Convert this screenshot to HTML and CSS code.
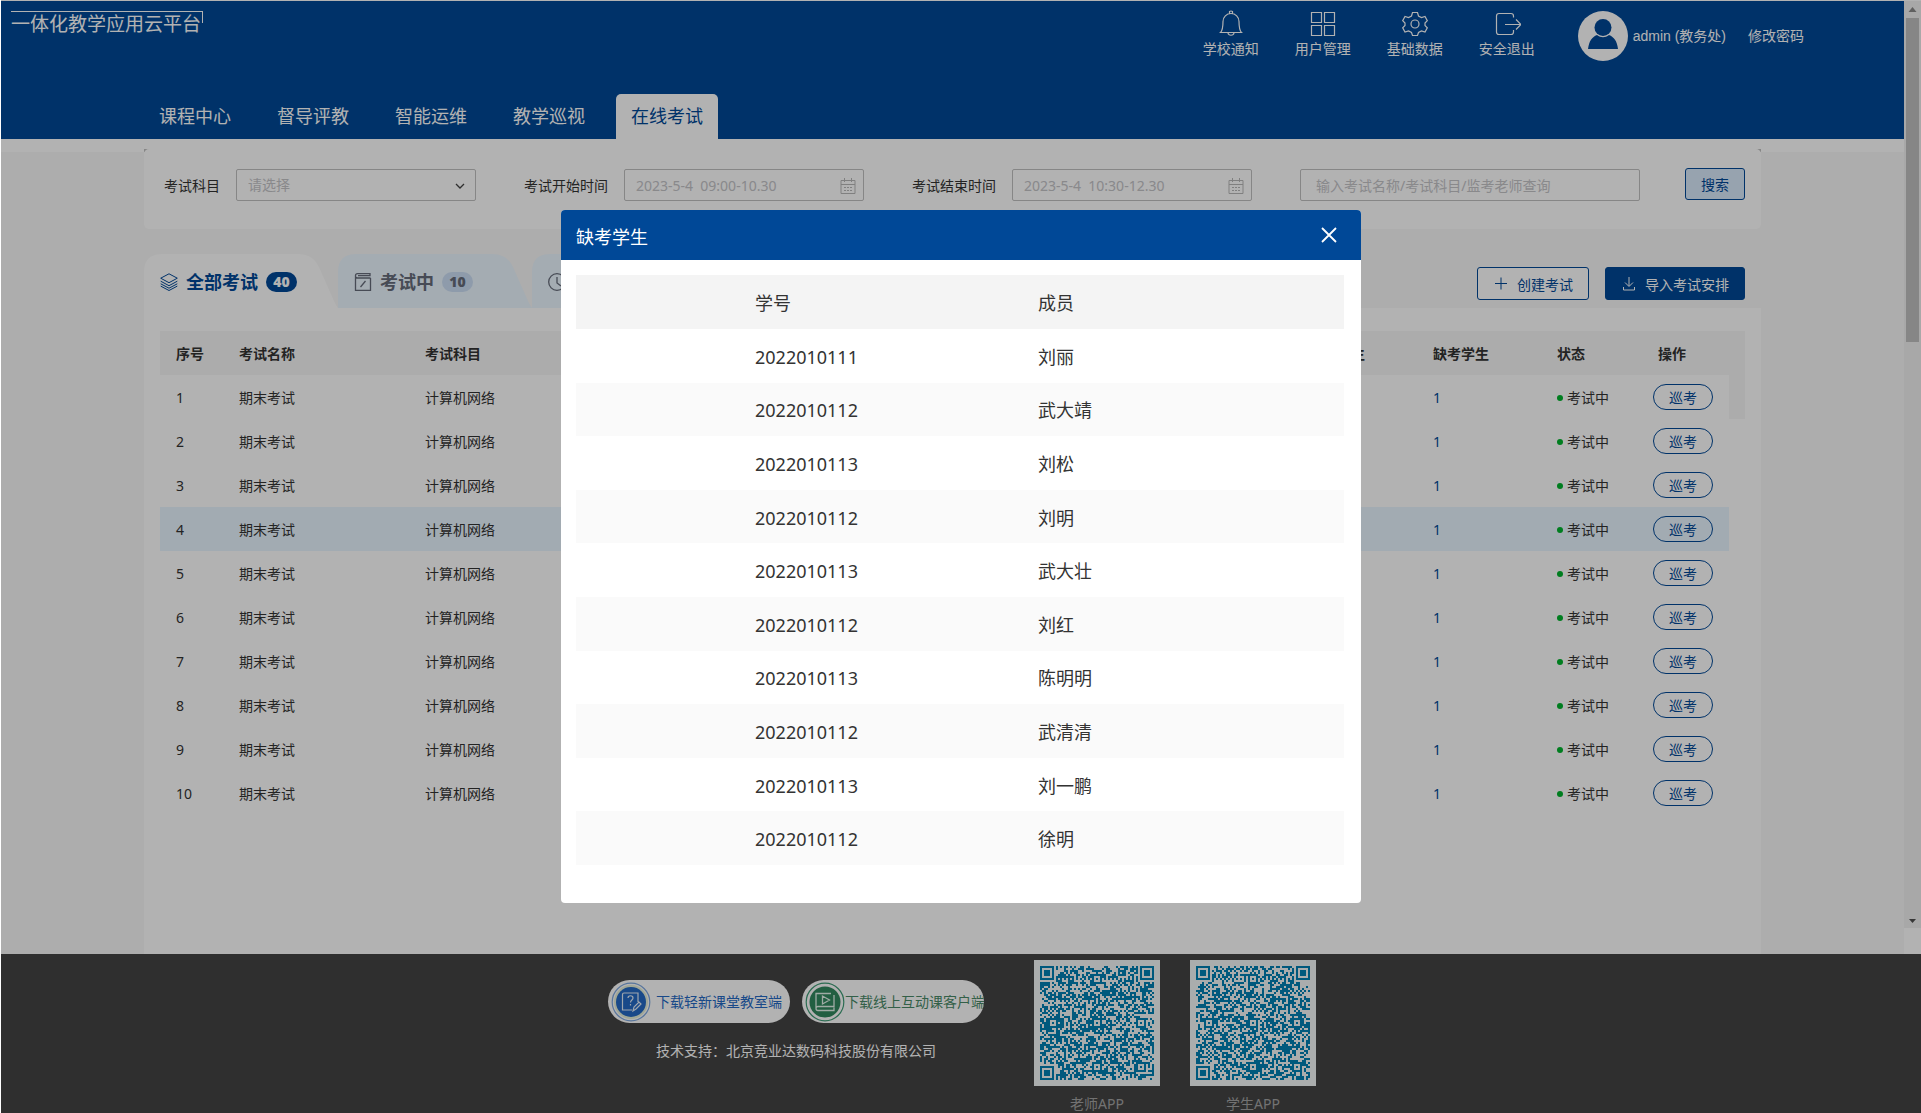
FILE: index.html
```html
<!DOCTYPE html>
<html lang="zh-CN">
<head>
<meta charset="utf-8">
<title>一体化教学应用云平台</title>
<link rel="stylesheet" href="styles.css">
</head>
<body>
<div class="viewport">
  <div class="page">
    <header class="header">
      <div class="header-top">
        <div class="logo">一体化教学应用云平台</div>
        <div class="tools">
          <a class="tool" href="#">
            <svg width="28" height="28" viewBox="0 0 28 28"><path d="M3.500 23.500h21c-2-2-2.500-4-2.500-11 0-4.500-3.500-8-8-8s-8 3.500-8 8c0 7-.5 9-2.500 11zM12.500 4.500V2.500q1.500-1 3 0v2M11 24c.5 3 5.500 3 6 0"/></svg>
            学校通知</a>
          <a class="tool" href="#">
            <svg width="28" height="28" viewBox="0 0 28 28"><path d="M2.500 3.500h10v10h-10zM15.500 3.500h10v10h-10zM2.500 16.500h10v10h-10zM15.500 16.500h10v10h-10z"/></svg>
            用户管理</a>
          <a class="tool" href="#">
            <svg width="28" height="28" viewBox="0 0 28 28"><circle cx="14" cy="15" r="4"/><path d="M11.500 3.500h5l1 3.500 3 1.500 3.500-1 2.300 4.200-2.300 2.300v2.500l2.300 2.300-2.300 4.200-3.500-1-3 1.500-1 3h-5l-1-3-3-1.500-3.500 1-2.300-4.200 2.300-2.300v-2.500l-2.300-2.300 2.300-4.200 3.500 1 3-1.500z"/></svg>
            基础数据</a>
          <a class="tool" href="#">
            <svg width="28" height="28" viewBox="0 0 28 28"><path d="M20.500 8.500V7q0-2.500-2.500-2.500H6Q3.500 4.500 3.500 7v16q0 2.500 2.500 2.500h12q2.500 0 2.500-2.500v-2M12 15.500h16M23 10.500l5 5-5 5"/></svg>
            安全退出</a>
        </div>
        <div class="user">
          <svg class="avatar" width="50" height="50" viewBox="0 0 50 50"><circle cx="25" cy="25" r="25" fill="#fff"/><circle cx="25" cy="16.500" r="8.500" fill="#004897"/><path d="M10 38c1-8 4-12 9-14 4 3 8 3 12 0 5 2 8 6 9 14z" fill="#004897"/></svg>
          <span class="user-name">admin (教务处)</span>
          <a class="password" href="#">修改密码</a>
        </div>
      </div>
      <nav class="nav">
        <a href="#">课程中心</a>
        <a href="#">督导评教</a>
        <a href="#">智能运维</a>
        <a href="#">教学巡视</a>
        <a class="active" href="#">在线考试</a>
      </nav>
    </header>
    <main class="main">
      <div class="filter-wrap">
        <form class="filters">
          <label for="subject">考试科目</label>
          <div class="control">
            <select id="subject"><option>请选择</option></select>
            <svg class="chevron" width="12" height="12" viewBox="0 0 12 12"><path d="M2 4l4 4 4-4"/></svg>
          </div>
          <label for="start">考试开始时间</label>
          <div class="control">
            <input id="start" type="text" placeholder="2023-5-4&nbsp; 09:00-10.30">
            <svg class="calendar" width="16" height="16" viewBox="0 0 16 16"><path d="M1 2.500h14v13H1zM1 6.500h14M4.500 0v4M11.500 0v4M4 9.500h2M7 9.500h2M10 9.500h2M4 12.500h2M7 12.500h2M10 12.500h2"/></svg>
          </div>
          <label for="end">考试结束时间</label>
          <div class="control">
            <input id="end" type="text" placeholder="2023-5-4&nbsp; 10:30-12.30">
            <svg class="calendar" width="16" height="16" viewBox="0 0 16 16"><path d="M1 2.500h14v13H1zM1 6.500h14M4.500 0v4M11.500 0v4M4 9.500h2M7 9.500h2M10 9.500h2M4 12.500h2M7 12.500h2M10 12.500h2"/></svg>
          </div>
          <input class="search" type="text" aria-label="查询" placeholder="输入考试名称/考试科目/监考老师查询">
          <button class="search-btn" type="button">搜索</button>
        </form>
      </div>
      <section class="exams">
        <div class="tab-bar">
          <div class="tabs">
            <button class="tab current" type="button">
              <svg class="tab-shape" viewBox="0 0 194 54"><path d="M0 54V18Q0 0 18 0H154C165 0 171 5 175 13L190 47Q193 53 194 54z"/></svg>
              <svg class="tab-icon" width="18" height="18" viewBox="0 0 18 18"><path d="M9 .8L17.300 5.200 9 9.700.7 5.200zM.7 8.200L9 12.700l8.300-4.500M.7 10.800L9 15.200l8.300-4.400M.7 13.100L9 17.500l8.300-4.400"/></svg>
              <span>全部考试</span><b class="badge">40</b>
            </button>
            <button class="tab" type="button">
              <svg class="tab-shape" viewBox="0 0 194 54"><path d="M0 54V18Q0 0 18 0H154C165 0 171 5 175 13L190 47Q193 53 194 54z"/></svg>
              <svg class="tab-icon" width="18" height="18" viewBox="0 0 18 18"><path d="M16.500 5v12.300h-15V2.500Q1.500.7 3.500.7h12.500v2H4M1.500 3.500Q2 5 3.500 5h13M6.500 14l5-6"/></svg>
              <span>考试中</span><b class="badge">10</b>
            </button>
            <button class="tab" type="button" aria-label="时间">
              <svg class="tab-shape" viewBox="0 0 194 54"><path d="M0 54V18Q0 0 18 0H154C165 0 171 5 175 13L190 47Q193 53 194 54z"/></svg>
              <svg class="tab-icon" width="18" height="18" viewBox="0 0 18 18"><circle cx="9" cy="9" r="8.300"/><path d="M9 4v6l4 3"/></svg>
            </button>
          </div>
          <div class="actions">
            <button class="btn" type="button"><svg width="12" height="14" viewBox="0 0 12 14"><path d="M0 6.500h12M6 .5v12"/></svg><span>创建考试</span></button>
            <button class="btn primary" type="button"><svg width="12" height="14" viewBox="0 0 12 14"><path d="M6 0v9M2 5.500l4 4 4-4M.5 10v3h11v-3"/></svg><span>导入考试安排</span></button>
          </div>
        </div>
        <div class="exam-body">
          <table class="exam-table">
            <colgroup><col class="c-no"><col class="c-name"><col class="c-name"><col><col class="c-num"><col class="c-num"><col class="c-state"><col class="c-op"><col class="c-gutter"></colgroup>
            <thead>
              <tr><th>序号</th><th>考试名称</th><th>考试科目</th><th></th><th>实考学生</th><th>缺考学生</th><th>状态</th><th>操作</th><th></th></tr>
            </thead>
            <tbody id="exam-rows"></tbody>
          </table>
        </div>
      </section>
    </main>
  </div>
  <div class="scrollbar">
    <svg width="17" height="17" viewBox="0 0 17 17"><path d="M4.500 11h8l-4-5z" fill="#8a8a8a"/></svg>
    <div class="thumb"></div>
    <svg class="down" width="17" height="17" viewBox="0 0 17 17"><path d="M5 8h7l-3.500 4z" fill="#505050"/></svg>
  </div>
</div>
<footer class="footer">
  <div class="downloads">
    <div class="pills">
      <a class="pill blue" href="#"><svg width="40" height="40" viewBox="0 0 40 40"><circle cx="20" cy="20" r="18.800" fill="#fff" stroke="#7fa9e0" stroke-width="1.200"/><circle cx="20" cy="20" r="17" fill="#e6f0d8"/><circle cx="20" cy="20" r="15" fill="#2569c4"/><path d="M21 28H11.500V12.500Q11.500 11 13 11h14v9M17 16c0-3 5-3 5 0 0 2-2.500 2-2.500 4.500M19.500 22v1.500M22 29l1-4 5-5 2 2-5 5z" fill="none" stroke="#e4eefa" stroke-width="1.200"/></svg>下载轻新课堂教室端</a>
      <a class="pill green" href="#"><svg width="40" height="40" viewBox="0 0 40 40"><circle cx="20" cy="20" r="18.800" fill="#fff" stroke="#3f9c76" stroke-width="1.200"/><circle cx="20" cy="20" r="15.500" fill="#32895f"/><path d="M29 13v11.500H13q-2 0-2 2t2 2h16v-3M11 26V11.500h15M17.500 14v8l7-4z" fill="none" stroke="#e4f5ec" stroke-width="1.300"/></svg>下载线上互动课客户端</a>
    </div>
    <p>技术支持：北京竞业达数码科技股份有限公司</p>
  </div>
  <figure class="qr"><svg viewBox="0 0 63 63" data-seed="17"><path/></svg><figcaption>老师APP</figcaption></figure>
  <figure class="qr"><svg viewBox="0 0 63 63" data-seed="91"><path/></svg><figcaption>学生APP</figcaption></figure>
</footer>

<div class="overlay">
  <section class="modal" role="dialog" aria-labelledby="modal-title">
    <div class="modal-head">
      <h2 id="modal-title">缺考学生</h2>
      <button type="button" aria-label="关闭"><svg width="16" height="16" viewBox="0 0 16 16"><path d="M1 1l14 14M15 1L1 15"/></svg></button>
    </div>
    <table class="student-table">
      <thead><tr><th>学号</th><th>成员</th></tr></thead>
      <tbody>
        <tr><td>2022010111</td><td>刘丽</td></tr>
        <tr><td>2022010112</td><td>武大靖</td></tr>
        <tr><td>2022010113</td><td>刘松</td></tr>
        <tr><td>2022010112</td><td>刘明</td></tr>
        <tr><td>2022010113</td><td>武大壮</td></tr>
        <tr><td>2022010112</td><td>刘红</td></tr>
        <tr><td>2022010113</td><td>陈明明</td></tr>
        <tr><td>2022010112</td><td>武清清</td></tr>
        <tr><td>2022010113</td><td>刘一鹏</td></tr>
        <tr><td>2022010112</td><td>徐明</td></tr>
      </tbody>
    </table>
  </section>
</div>
<script src="app.js"></script>
</body>
</html>
```
FILE: styles.css
```css
* { box-sizing: border-box; }

body {
  margin: 0;
  padding: 1px 0 0 1px;
  min-height: 100vh;
  display: flex;
  flex-direction: column;
  position: relative;
  background: #fff;
  color: #333;
  font: 14px/20px "Noto Sans", "Noto Sans CJK SC", sans-serif;
}

a { color: inherit; text-decoration: none; }
button, input, select { font: inherit; }

.viewport { flex: 1; display: flex; }
.page { flex: 1; display: flex; flex-direction: column; }

/* header */
.header {
  height: 138px;
  display: flex;
  flex-direction: column;
  justify-content: space-between;
  background: #004897;
  color: #fff;
  font-family: "Liberation Sans", "Noto Sans CJK SC", sans-serif;
}
.header-top {
  display: flex;
  align-items: flex-start;
  padding: 10px 100px 0 10px;
}
.logo {
  width: 192px;
  height: 24px;
  font-size: 19px;
  line-height: 27px;
  white-space: nowrap;
  background:
    linear-gradient(#fff, #fff) 0 0 / 100% 1px no-repeat,
    linear-gradient(#fff, #fff) 100% 0 / 1px 12px no-repeat;
}
.tools { display: flex; gap: 36px; margin-left: auto; margin-right: 43px; }
.tool {
  width: 56px;
  display: flex;
  flex-direction: column;
  align-items: center;
  white-space: nowrap;
}
.tool svg { fill: none; stroke: #fff; stroke-width: 1.2; margin-top: -2px; margin-bottom: 2px; }
.user { display: flex; align-items: center; white-space: nowrap; }
.user-name { margin-left: 5px; }
.password { margin-left: 22px; }

.nav { display: flex; gap: 16px; padding: 0 143px; font-size: 18px; line-height: 43px; }
.nav a { width: 102px; padding-top: 2px; text-align: center; border-radius: 5px 5px 0 0; }
.nav .active { background: #fff; color: #004897; }

/* filters */
.main {
  flex: 1;
  display: flex;
  flex-direction: column;
  padding: 10px 143px 0;
  background: linear-gradient(#fff 13px, #f8f8f8 13px);
}
.filter-wrap { background: linear-gradient(#c0c0c0 3px, transparent 3px); }
.filters {
  height: 80px;
  display: flex;
  align-items: flex-start;
  padding: 20px 16px 0 20px;
  background: #fff;
  border-radius: 5px;
}
.filters label { line-height: 34px; margin-right: 16px; white-space: nowrap; }
.control { position: relative; width: 240px; margin-right: 48px; }
.filters input, .filters select {
  width: 100%;
  height: 32px;
  padding: 0 11px;
  border: 1px solid #c0c0c0;
  border-radius: 2px;
  background: #fff;
  color: #c4c4c8;
  outline: none;
  appearance: none;
}
.filters ::placeholder { color: #c4c4c8; opacity: 1; }
.control svg { position: absolute; top: 9px; right: 8px; fill: none; stroke: #b8b8b8; }
.control .chevron { top: 11px; right: 10px; stroke: #444; stroke-width: 1.3; }
.filters .search { flex: 1; width: auto; min-width: 0; padding: 0 15px; }
.search-btn {
  width: 60px;
  height: 32px;
  margin: -1px 0 0 45px;
  padding: 2px 0 0;
  border: 1px solid #004897;
  border-radius: 3px;
  background: #d9eafb;
  color: #004897;
}

/* exam tabs */
.exams { flex: 1; display: flex; flex-direction: column; margin-top: 25px; }
.tab-bar { display: flex; justify-content: space-between; height: 54px; }
.tabs { display: flex; }
.tab {
  position: relative;
  width: 194px;
  height: 54px;
  display: flex;
  align-items: center;
  gap: 8px;
  padding: 2px 0 0 16px;
  border: 0;
  background: none;
  color: #666c7a;
  font-size: 18px;
  font-weight: bold;
}
.tab-shape { position: absolute; inset: 0; fill: #ebf6ff; }
.tab-icon, .tab span, .badge { position: relative; }
.tab-icon { fill: none; stroke: #666c7a; stroke-width: 1.3; }
.badge {
  width: 31px;
  border-radius: 10px;
  background: #ccdff5;
  font-size: 14px;
  line-height: 20px;
  text-align: center;
}
.current { color: #004897; }
.current .tab-shape { fill: #fff; }
.current .tab-icon { stroke: #004897; stroke-width: 1; }
.current .badge { background: #004897; color: #fff; }

.actions { display: flex; gap: 16px; padding: 13px 16px 0 0; }
.btn {
  height: 33px;
  display: flex;
  align-items: center;
  gap: 10px;
  padding: 0 15px 0 17px;
  border: 1px solid #004897;
  border-radius: 3px;
  background: #fff;
  color: #004897;
  white-space: nowrap;
}
.btn span { padding-top: 2px; }
.btn svg { fill: none; stroke: currentColor; stroke-width: 1; }
.btn.primary { background: #004897; color: #fff; }

/* exam table */
.exam-body { flex: 1; padding: 23px 16px 0; background: #fff; }
.exam-table { width: 100%; table-layout: fixed; border-collapse: collapse; }
.exam-table th, .exam-table td { height: 44px; padding: 2px 0 0 16px; text-align: left; white-space: nowrap; }
.exam-table th, .exam-table .gutter { background: #f7f7f7; }
.exam-table th:last-child, .exam-table .gutter { padding: 0; }
.exam-table td:nth-child(8) { padding-top: 0; }
.c-no { width: 63px; }
.c-name { width: 186px; }
.c-num { width: 124px; }
.c-state { width: 101px; }
.c-op { width: 87px; }
.c-gutter { width: 16px; }
.exam-table .hover td { background: #e9f5ff; }
.exam-table a { color: #004897; }
.state { display: flex; align-items: center; gap: 4px; }
.state::before { content: ""; width: 6px; height: 6px; border-radius: 3px; background: #00b42d; }
.exam-table button {
  display: block;
  width: 60px;
  height: 26px;
  margin-left: -5px;
  padding: 2px 0 0;
  border: 1px solid #004897;
  border-radius: 13px;
  background: none;
  color: #004897;
  line-height: 22px;
}

/* scrollbar */
.scrollbar { width: 17px; display: flex; flex-direction: column; margin-bottom: 26px; background: #f1f1f1; }
.thumb { height: 35%; margin: 0 2px; background: #c1c1c1; }
.down { margin-top: auto; }

/* footer */
.footer {
  display: flex;
  justify-content: center;
  padding: 6px 0 0 2px;
  background: #444;
  color: #fff;
}
.downloads { margin-right: 50px; padding-top: 20px; text-align: center; }
.downloads p { margin: 18px 0 0; line-height: 20px; }
.pills { display: flex; gap: 12px; }
.pill {
  width: 182px;
  height: 43px;
  display: flex;
  align-items: center;
  padding-left: 3px;
  border-radius: 22px;
  background: #fff;
  overflow: hidden;
  white-space: nowrap;
}
.pill svg { flex: none; }
.blue { color: #2569c4; gap: 5px; }
.green { color: #4a8a68; }
.qr { width: 126px; margin: 0; text-align: center; color: #a4a4a4; line-height: 18px; }
.qr + .qr { margin-left: 30px; }
.qr svg { display: block; width: 126px; height: 126px; margin-bottom: 9px; background: #f4f8f8; fill: #0080b4; }

/* modal */
.overlay {
  position: absolute;
  inset: 0 0 0 1px;
  display: flex;
  justify-content: center;
  align-items: flex-start;
  padding-top: 210px;
  background: rgba(0, 0, 0, .3);
}
.modal {
  width: 800px;
  padding-bottom: 38px;
  border-radius: 4px;
  background: #fff;
  overflow: hidden;
}
.modal-head {
  height: 50px;
  display: flex;
  align-items: center;
  justify-content: space-between;
  padding: 0 24px 0 15px;
  background: #004897;
  color: #fff;
}
.modal-head h2 { margin: 0; padding-top: 4px; font-size: 18px; font-weight: normal; }
.modal-head button { display: flex; padding: 0; border: 0; background: none; }
.modal-head svg { stroke: #fff; stroke-width: 1.8; }
.student-table {
  width: calc(100% - 32px);
  height: 590px;
  margin: 15px 17px 0 15px;
  table-layout: fixed;
  border-collapse: collapse;
  font-size: 18px;
}
.student-table th, .student-table td { padding: 2px 0 0; text-align: left; font-weight: normal; }
.student-table th { height: 54px; background: #f4f4f4; }
.student-table th:first-child { width: 462px; }
.student-table tr > :first-child { padding-left: 179px; }
.student-table tbody tr:nth-child(even) { background: #fafafa; }
```
FILE: app.js
```js
// Exam rows
var rows = '';
for (var n = 1; n <= 10; n++) {
  rows += '<tr' + (n === 4 ? ' class="hover"' : '') + '><td>' + n +
    '</td><td>期末考试</td><td>计算机网络</td><td></td><td></td>' +
    '<td><a href="#">1</a></td><td><span class="state">考试中</span></td>' +
    '<td><button type="button">巡考</button></td>' +
    (n === 1 ? '<td class="gutter"></td>' : '') + '</tr>';
}
document.getElementById('exam-rows').innerHTML = rows;

// QR symbols: 57 x 57 modules with finder and alignment squares
document.querySelectorAll('.qr svg').forEach(function (svg) {
  var seed = Number(svg.dataset.seed), size = 57, d = '';
  var marks = [[28, 6], [6, 28], [28, 28], [50, 28], [28, 50], [50, 50]];
  function ring(dx, dy) { return Math.max(Math.abs(dx), Math.abs(dy)); }
  function module(x, y) {
    seed = (seed * 1103515245 + 12345) % 2147483648;
    var random = seed / 2147483648 < 0.52;
    var corners = [[3, 3], [53, 3], [3, 53]];
    for (var i = 0; i < 3; i++) {
      var r = ring(x - corners[i][0], y - corners[i][1]);
      if (r <= 4) return r !== 4 && r !== 2;
    }
    for (var j = 0; j < marks.length; j++) {
      var m = ring(x - marks[j][0], y - marks[j][1]);
      if (m <= 2) return m !== 1;
    }
    if (x === 6 || y === 6) return (x + y) % 2 === 0;
    return random;
  }
  for (var y = 0; y < size; y++)
    for (var x = 0; x < size; x++)
      if (module(x, y)) d += 'M' + (x + 3) + ' ' + (y + 3) + 'h1v1h-1z';
  svg.firstElementChild.setAttribute('d', d);
});
```
